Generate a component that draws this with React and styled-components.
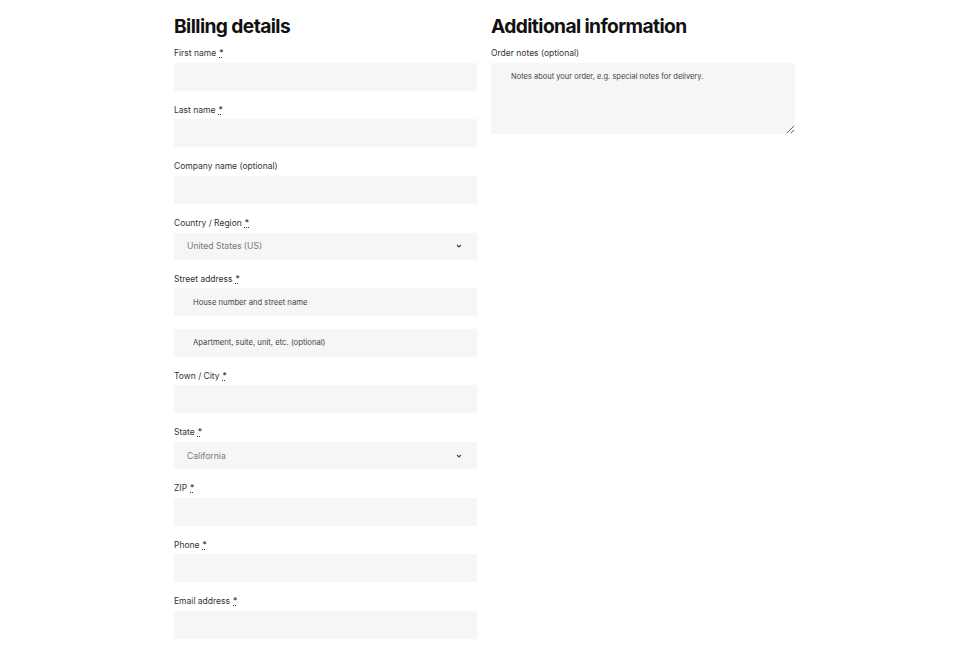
import React from 'react';
import styled, { createGlobalStyle } from 'styled-components';

const GlobalStyle = createGlobalStyle`
    body {
        margin: 0;
        background: #fff;
        font-family: 'Inter', 'Open Sans', sans-serif;
    }
`

const billingFields = [
    { label: 'First name', required: true },
    { label: 'Last name', required: true },
    { label: 'Company name (optional)' },
    { label: 'Country / Region', required: true, select: 'United States (US)' },
    { label: 'Street address', required: true, placeholders: ['House number and street name', 'Apartment, suite, unit, etc. (optional)'] },
    { label: 'Town / City', required: true },
    { label: 'State', required: true, select: 'California' },
    { label: 'ZIP', required: true },
    { label: 'Phone', required: true },
    { label: 'Email address', required: true },
]

const Chevron = () => (
    <svg width="6" height="4" viewBox="0 0 6 4" fill="none">
        <path d="M1 1l2 2 2-2" stroke="#444" strokeWidth="1.1" />
    </svg>
)

const Field = ({ field }) => (
    <FieldRow>
        <Label>
            {field.label}
            {field.required && <Req title="required">*</Req>}
        </Label>
        {field.select ? (
            <Select>
                <span>{field.select}</span>
                <Chevron />
            </Select>
        ) : field.placeholders ? (
            <Stack>
                {field.placeholders.map((p) => (
                    <Input key={p} placeholder={p} $indent />
                ))}
            </Stack>
        ) : (
            <Input />
        )}
    </FieldRow>
)

const App = () => {
    return (
        <Page>
            <GlobalStyle />
            <Columns>
                <Column>
                    <Heading>Billing details</Heading>
                    {billingFields.map((f) => (
                        <Field key={f.label} field={f} />
                    ))}
                </Column>
                <Column>
                    <Heading>Additional information</Heading>
                    <FieldRow>
                        <Label>Order notes (optional)</Label>
                        <Notes placeholder="Notes about your order, e.g. special notes for delivery." />
                    </FieldRow>
                </Column>
            </Columns>
        </Page>
    );
};

const Page = styled.div`
    width: 969px;
    height: 650px;
    overflow: hidden;
    display: flex;
    justify-content: center;
`

const Columns = styled.div`
    width: 621px;
    display: grid;
    grid-template-columns: 303px 304px;
    column-gap: 14px;
    align-items: start;
    padding-top: 13px;
`

const Column = styled.div`
    display: flex;
    flex-direction: column;
`

const Heading = styled.h3`
    margin: 0 0 7px;
    font-family: 'Inter', sans-serif;
    font-size: 19.2px;
    line-height: 26px;
    font-weight: 700;
    letter-spacing: -0.6px;
    color: #111;
`

const FieldRow = styled.div`
    display: flex;
    flex-direction: column;
    margin-bottom: 12px;
`

const Label = styled.label`
    font-size: 8.5px;
    line-height: 14px;
    color: #333;
    margin-bottom: 2.5px;
`

const Req = styled.abbr`
    margin-left: 3px;
    text-decoration: underline dotted;
    color: #333;
`

const Stack = styled.div`
    display: flex;
    flex-direction: column;
    gap: 12.5px;
`

const Input = styled.input`
    box-sizing: border-box;
    width: 100%;
    height: 28px;
    border: none;
    outline: none;
    background: #f6f6f6;
    padding: 0 ${(p) => (p.$indent ? '19px' : '13px')};
    font-family: 'Inter', sans-serif;
    font-size: 7.7px;
    color: #333;
    &::placeholder {
        color: #444;
    }
`

const Select = styled.div`
    box-sizing: border-box;
    height: 27px;
    margin-top: 0.5px;
    background: #f6f6f6;
    display: flex;
    align-items: center;
    justify-content: space-between;
    padding: 0 15px 0 13px;
    font-size: 8.6px;
    color: #777;
`

const Notes = styled.textarea`
    box-sizing: border-box;
    width: 100%;
    height: 71px;
    border: none;
    outline: none;
    background: #f6f6f6;
    padding: 7px 20px;
    font-family: 'Inter', sans-serif;
    font-size: 7.5px;
    line-height: 14px;
    resize: vertical;
    &::placeholder {
        color: #444;
    }
`

export default App;
